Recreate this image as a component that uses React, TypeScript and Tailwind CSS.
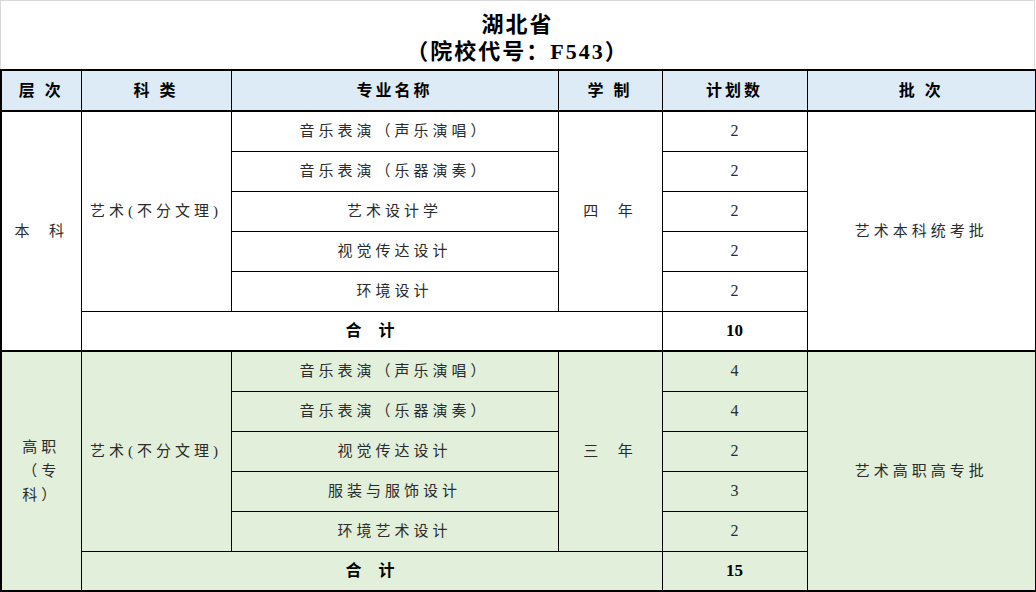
const sections = [
  {
    level: "本  科",
    levelLines: null as string[] | null,
    category: "艺术(不分文理)",
    years: "四  年",
    batch: "艺术本科统考批",
    total: "10",
    bg: "bg-white",
    majors: [
      ["音乐表演（声乐演唱）", "2"],
      ["音乐表演（乐器演奏）", "2"],
      ["艺术设计学", "2"],
      ["视觉传达设计", "2"],
      ["环境设计", "2"],
    ],
  },
  {
    level: "",
    levelLines: ["高职", "（专", "科）"],
    category: "艺术(不分文理)",
    years: "三  年",
    batch: "艺术高职高专批",
    total: "15",
    bg: "bg-[#e2efda]",
    majors: [
      ["音乐表演（声乐演唱）", "4"],
      ["音乐表演（乐器演奏）", "4"],
      ["视觉传达设计", "2"],
      ["服装与服饰设计", "3"],
      ["环境艺术设计", "2"],
    ],
  },
];

const headers = ["层 次", "科 类", "专业名称", "学 制", "计划数", "批 次"];

export default function App() {
  return (
    <div className="w-[1036px] h-[592px] bg-white overflow-hidden font-['Liberation_Serif','Noto_Sans_CJK_SC',serif] text-[#2b2b2b]">
      {/* Title */}
      <div className="h-[69px] w-[1035px] border-l border-t border-r border-[#d9d9d9] pt-[10px] text-center text-[22px] font-bold leading-[27px] text-black">
        <div className="tracking-[2px]">湖北省</div>
        <div className="tracking-[2px]">（院校代号：F543）</div>
      </div>

      <table className="w-[1035px] table-fixed border-collapse border-2 border-black">
        <colgroup>
          <col className="w-[80px]" />
          <col className="w-[150px]" />
          <col className="w-[327px]" />
          <col className="w-[104px]" />
          <col className="w-[145px]" />
          <col className="w-[229px]" />
        </colgroup>
        <thead>
          <tr className="h-[41px] bg-[#ddebf7]">
            {headers.map((h) => (
              <th
                key={h}
                className="border border-black border-y-2 p-0 text-center text-[16px] font-bold tracking-[3px] text-black whitespace-pre"
              >
                {h}
              </th>
            ))}
          </tr>
        </thead>
        {sections.map((s, si) => (
          <tbody key={si} className={s.bg}>
            {s.majors.map(([name, count], i) => (
              <tr key={name} className="h-[40px]">
                {i === 0 && (
                  <td
                    rowSpan={6}
                    className="border border-black p-0 text-center text-[15px] leading-[24px] tracking-[4px] whitespace-pre"
                  >
                    {s.levelLines
                      ? s.levelLines.map((l) => <div key={l}>{l}</div>)
                      : s.level}
                  </td>
                )}
                {i === 0 && (
                  <td
                    rowSpan={5}
                    className="border border-black p-0 text-center text-[15px] tracking-[4px]"
                  >
                    {s.category}
                  </td>
                )}
                <td className="border border-black p-0 text-center text-[15px] tracking-[4px]">
                  {name}
                </td>
                {i === 0 && (
                  <td
                    rowSpan={5}
                    className="border border-black p-0 text-center text-[15px] tracking-[4px] whitespace-pre"
                  >
                    {s.years}
                  </td>
                )}
                <td className="border border-black p-0 text-center text-[16px]">
                  {count}
                </td>
                {i === 0 && (
                  <td
                    rowSpan={6}
                    className="border border-black p-0 text-center text-[15px] tracking-[4px]"
                  >
                    {s.batch}
                  </td>
                )}
              </tr>
            ))}
            <tr className="h-[40px] border-b-2 border-black">
              <td
                colSpan={3}
                className="border border-black border-b-2 p-0 text-center text-[16px] font-bold tracking-[3px] text-black whitespace-pre"
              >
                合  计
              </td>
              <td className="border border-black border-b-2 p-0 text-center text-[17px] font-bold text-black">
                {s.total}
              </td>
            </tr>
          </tbody>
        ))}
      </table>
    </div>
  );
}
